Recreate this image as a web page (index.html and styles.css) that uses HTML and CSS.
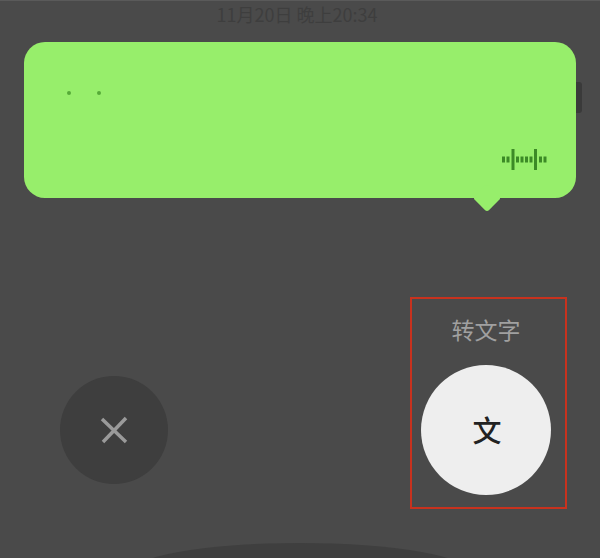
FILE: index.html
```html
<!DOCTYPE html>
<html lang="zh-CN">

<head>
  <title>语音转文字</title>
  <meta charset="utf-8">
  <link rel="stylesheet" href="styles.css">
</head>

<body>
  <div class="screen">
    <div class="time">11月20日 晚上20:34</div>
    <div class="scroll-stub"></div>

    <div class="bubble">
      <div class="dots">
        <span class="dot"></span>
        <span class="dot"></span>
      </div>
      <svg class="wave" width="45" height="21" viewBox="0 0 45 21">
        <g fill="#3c8a26">
          <rect x="0" y="7.5" width="3" height="6"/>
          <rect x="4.5" y="7.5" width="3" height="6"/>
          <rect x="9.5" y="0" width="3" height="21"/>
          <rect x="14" y="7.5" width="3" height="6"/>
          <rect x="18.5" y="7.5" width="3" height="6"/>
          <rect x="23" y="7.5" width="3" height="6"/>
          <rect x="27.5" y="7.5" width="3" height="6"/>
          <rect x="32" y="0" width="3" height="21"/>
          <rect x="37" y="7.5" width="3" height="6"/>
          <rect x="41.5" y="7.5" width="3" height="6"/>
        </g>
      </svg>
      <div class="tail"></div>
    </div>

    <div class="actions">
      <button class="cancel" aria-label="取消">
        <svg width="30" height="30" viewBox="0 0 30 30">
          <path d="M3 4 L27 27 M27 3 L4 27" stroke="#9a9a9a" stroke-width="3.5" fill="none"/>
        </svg>
      </button>
      <div class="convert">
        <div class="convert-label">转文字</div>
        <button class="convert-button">文</button>
      </div>
    </div>

    <div class="bottom-arc"></div>
  </div>
</body>

</html>
```

FILE: styles.css
```css
:root {
  --screen-color: #4a4a4a;
  --bubble-color: #97ee6b;
  --mark-color: #c8321e;
}

body {
  margin: 0;
  padding: 0;
  font-family: "Noto Sans CJK SC", "Liberation Sans", sans-serif;
}

.screen {
  position: relative;
  width: 600px;
  height: 558px;
  box-sizing: border-box;
  overflow: hidden;
  background: var(--screen-color);
  border-top: 1px solid #5a5a5a;
}

.time {
  height: 41px;
  padding: 1px 6px 0 0;
  box-sizing: border-box;
  text-align: center;
  font-size: 18px;
  line-height: 24px;
  color: #3e3e3e;
}

.scroll-stub {
  position: absolute;
  top: 81px;
  left: 574px;
  width: 8px;
  height: 31px;
  border-radius: 3px;
  background: #3a3a3a;
}

.bubble {
  position: relative;
  height: 156px;
  margin: 0 24px;
  border-radius: 21px;
  background: var(--bubble-color);
}

.dots {
  display: flex;
  gap: 26px;
  padding: 49px 0 0 43px;
}

.dot {
  width: 4px;
  height: 4px;
  border-radius: 50%;
  background: #56aa38;
}

.wave {
  position: absolute;
  right: 29px;
  bottom: 28px;
}

.tail {
  position: absolute;
  left: 453px;
  bottom: -10px;
  width: 20px;
  height: 20px;
  border-radius: 3px;
  background: var(--bubble-color);
  transform: rotate(45deg);
}

.actions {
  display: flex;
  justify-content: space-between;
  align-items: flex-end;
  margin: 99px 33px 0 60px;
}

.cancel {
  width: 108px;
  height: 108px;
  margin-bottom: 25px;
  padding: 0;
  border: none;
  border-radius: 50%;
  background: #3e3e3e;
  display: flex;
  align-items: center;
  justify-content: center;
}

.convert {
  width: 157px;
  height: 212px;
  box-sizing: border-box;
  padding: 15px 5px 0 0;
  border: 2px solid var(--mark-color);
  display: flex;
  flex-direction: column;
  align-items: center;
}

.convert-label {
  height: 51px;
  font-size: 23px;
  line-height: 30px;
  color: #a0a0a0;
}

.convert-button {
  width: 130px;
  height: 130px;
  padding: 0 0 2px 2px;
  border: none;
  border-radius: 50%;
  background: #eeeeee;
  color: #222;
  font-family: inherit;
  font-size: 29px;
  font-weight: 500;
}

.bottom-arc {
  position: absolute;
  left: 130px;
  top: 542px;
  width: 340px;
  height: 60px;
  border-radius: 50%;
  background: #3f3f3f;
}
```
